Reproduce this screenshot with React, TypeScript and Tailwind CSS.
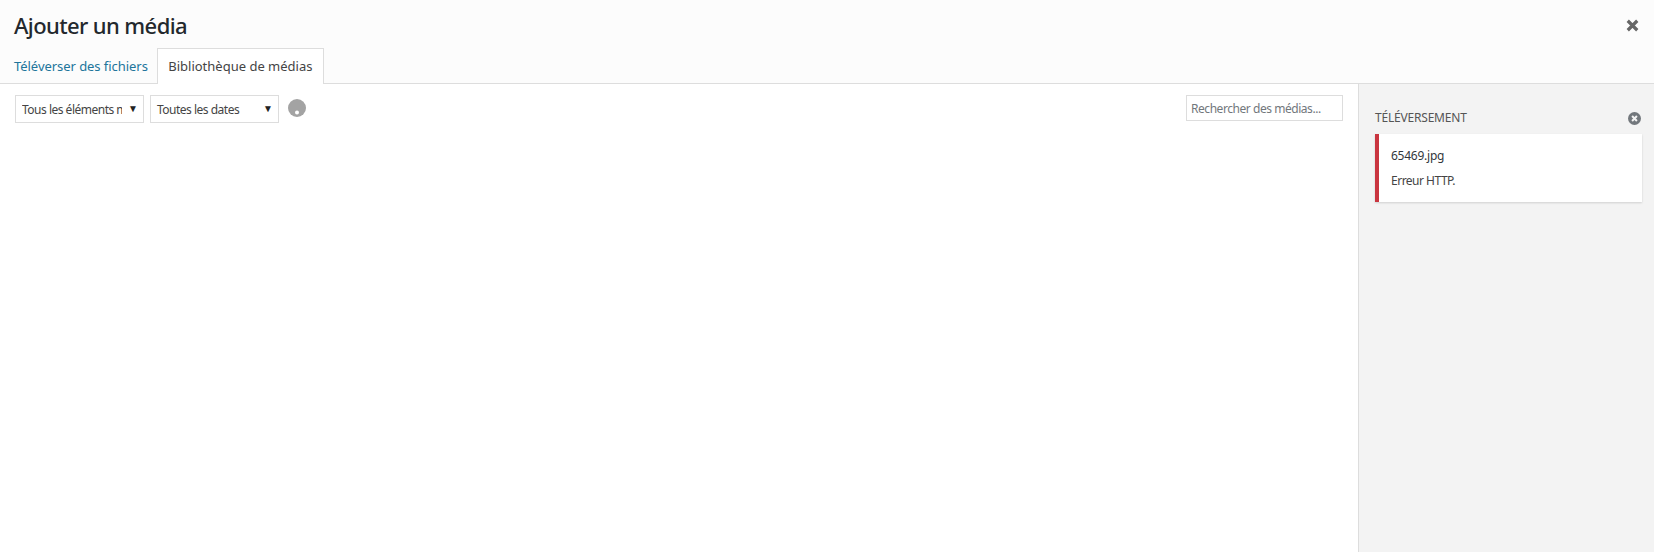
const App = () => {
  return (
    <div className="flex h-[552px] w-[1654px] flex-col overflow-hidden bg-white font-['Noto_Sans',sans-serif] text-[#23282d]">
      <header className="relative h-[84px] shrink-0 border-b border-[#dddddd] bg-[#fcfcfc] pl-[14px]">
        <h1 className="h-[48px] pt-[7px] text-[22px] leading-[36px] font-medium tracking-[-0.6px] text-[#23282d]">Ajouter un média</h1>
        <div className="flex items-start">
          <a className="mt-[8px] text-[13px] leading-[20px] tracking-[-0.05px] text-[#21759b]">Téléverser des fichiers</a>
          <div className="ml-[9px] h-[36px] w-[167px] border border-b-0 border-[#dddddd] bg-white pt-[7px] text-center text-[13px] leading-[20px] text-[#444444]">
            Bibliothèque de médias
          </div>
        </div>
        <button className="absolute top-[16px] right-[12px] h-[19px] w-[19px] text-[#666666]">
          <svg viewBox="0 0 20 20" className="h-[19px] w-[19px]" fill="none" stroke="currentColor" strokeWidth="3.4">
            <path d="M5 5l10 10M15 5L5 15" />
          </svg>
        </button>
      </header>
      <div className="flex min-h-0 flex-1">
        <main className="flex flex-1 items-start justify-between pt-[11px] pr-[15px] pl-[15px]">
          <div className="flex items-center gap-[6px]">
            <div className="relative h-[28px] w-[129px] overflow-hidden border border-[#dddddd] bg-white pt-[1px] pl-[6px] text-[12px] leading-[26px] tracking-[-0.5px] whitespace-nowrap text-[#444444]">
              <span className="block w-[100px] overflow-hidden">Tous les éléments médias</span>
              <span className="absolute top-[-1px] right-[5px] text-[10px] tracking-normal text-[#222222]">▼</span>
            </div>
            <div className="relative h-[28px] w-[129px] overflow-hidden border border-[#dddddd] bg-white pt-[1px] pl-[6px] text-[12px] leading-[26px] tracking-[-0.5px] whitespace-nowrap text-[#444444]">
              Toutes les dates
              <span className="absolute top-[-1px] right-[5px] text-[10px] tracking-normal text-[#222222]">▼</span>
            </div>
            <svg viewBox="0 0 18 18" className="mb-[2px] ml-[3px] h-[18px] w-[18px]">
              <circle cx="9" cy="9" r="9" fill="#a3a3a3" />
              <circle cx="9" cy="13.5" r="2" fill="#ffffff" />
            </svg>
          </div>
          <input
            placeholder="Rechercher des médias..."
            className="h-[26px] w-[157px] border border-[#dddddd] bg-white px-[4px] text-[12px] tracking-[-0.45px] text-[#32373c] outline-none placeholder:text-[#72777c]"
          />
        </main>
        <aside className="w-[296px] shrink-0 border-l border-[#dddddd] bg-[#f3f3f3] pt-[21px] pr-[12px] pl-[16px]">
          <div className="mb-[3px] flex h-[26px] items-center justify-between">
            <h2 className="text-[12px] tracking-[-0.2px] text-[#555555] uppercase">Téléversement</h2>
            <svg viewBox="0 0 14 14" className="mr-[1px] h-[13px] w-[13px]">
              <circle cx="7" cy="7" r="7" fill="#72777c" />
              <path d="M4.4 4.4l5.2 5.2M9.6 4.4l-5.2 5.2" stroke="#f3f3f3" strokeWidth="2.2" />
            </svg>
          </div>
          <div className="h-[68px] border-l-4 border-[#c9353f] bg-white pt-[12px] pl-[12px] shadow-[0_1px_2px_rgba(0,0,0,0.15)]">
            <p className="text-[12px] leading-[20px] tracking-[-0.25px] text-[#32373c]">65469.jpg</p>
            <p className="mt-[6px] text-[12px] leading-[18px] tracking-[-0.5px] text-[#444444]">Erreur HTTP.</p>
          </div>
        </aside>
      </div>
    </div>
  );
};

export default App;
